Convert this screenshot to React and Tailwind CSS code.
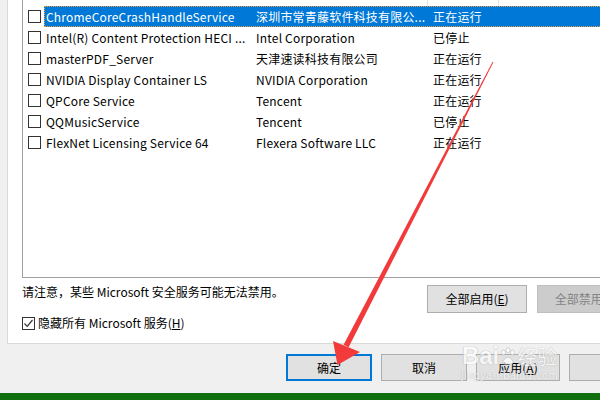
import React from "react";

const rows = [
  { name: "ChromeCoreCrashHandleService", maker: "深圳市常青藤软件科技有限公...", status: "正在运行", sel: true },
  { name: "Intel(R) Content Protection HECI ...", maker: "Intel Corporation", status: "已停止" },
  { name: "masterPDF_Server", maker: "天津速读科技有限公司", status: "正在运行" },
  { name: "NVIDIA Display Container LS", maker: "NVIDIA Corporation", status: "正在运行" },
  { name: "QPCore Service", maker: "Tencent", status: "正在运行" },
  { name: "QQMusicService", maker: "Tencent", status: "已停止" },
  { name: "FlexNet Licensing Service 64", maker: "Flexera Software LLC", status: "正在运行" },
];

const font = "font-['Noto_Sans_CJK_SC','Noto_Sans',sans-serif]";

function Box({ checked }) {
  return (
    <div className="w-[13px] h-[13px] border border-[#333333] bg-white flex items-center justify-center shrink-0">
      {checked && (
        <svg width="11" height="11" viewBox="0 0 11 11">
          <path d="M1.5 5.5 L4.2 8.3 L9.5 2" fill="none" stroke="#333" strokeWidth="1.2" />
        </svg>
      )}
    </div>
  );
}

export default function App() {
  return (
    <div className={`relative w-[600px] h-[400px] overflow-hidden bg-[#f0f0f0] flex flex-col text-[12px] text-black ${font}`}>
      {/* main white panel */}
      <div className="ml-[7px] h-[344px] bg-white border-l border-b border-[#d9d9d9] overflow-hidden flex flex-col shrink-0">
        {/* list box */}
        <div className="ml-[14px] w-[700px] h-[278px] border-l border-b border-[#a0a0a0] flex flex-col shrink-0">
          <div className="h-[6px] flex shrink-0">
            <div className="w-[405px] border-r border-[#e5e5e5]" />
            <div className="w-[71px] border-r border-[#e5e5e5]" />
          </div>
          {rows.map((r, i) => (
            <div key={i} className="h-[21px] flex items-center shrink-0">
              <div className="w-[21px] pl-[5px] flex items-center">
                <Box />
              </div>
              <div
                className={`flex-1 h-[21px] flex items-center leading-[19px] whitespace-nowrap tracking-[0.2px] ${
                  r.sel ? "bg-[#0078d7] text-white border border-dotted border-[#f5a040]" : "border border-transparent"
                }`}
              >
                <div className="w-[210px] pl-[1px]">{r.name}</div>
                <div className="w-[177px] pl-[1px]">{r.maker}</div>
                <div className="pl-[1px]">{r.status}</div>
              </div>
            </div>
          ))}
        </div>
        {/* lower area */}
        <div className="flex pl-[14px] pt-[7px]">
          <div className="flex-1 flex flex-col">
            <div className="h-[14px] leading-[14px] whitespace-nowrap">请注意，某些 Microsoft 安全服务可能无法禁用。</div>
            <div className="mt-[17px] flex items-center gap-[3px] h-[14px] whitespace-nowrap">
              <Box checked />
              <span className="leading-[14px]">
                隐藏所有 Microsoft 服务(<span className="underline">H</span>)
              </span>
            </div>
          </div>
          <div className="flex gap-[10px] shrink-0 mr-[-37px]">
            <div className="w-[100px] h-[28px] bg-[#e1e1e1] border border-[#adadad] flex items-center justify-center">
              全部启用(<span className="underline">E</span>)
            </div>
            <div className="w-[100px] h-[28px] bg-[#cccccc] border border-[#bfbfbf] text-[#838383] flex items-center justify-center">
              全部禁用(<span className="underline">D</span>)
            </div>
          </div>
        </div>
      </div>
      {/* bottom buttons */}
      <div className="flex gap-[9px] pl-[286px] mt-[10px] shrink-0">
        <div className="w-[86px] h-[27px] bg-[#e1e1e1] border-2 border-[#0078d7] flex items-center justify-center shrink-0">确定</div>
        <div className="w-[86px] h-[27px] bg-[#e1e1e1] border border-[#adadad] flex items-center justify-center shrink-0">取消</div>
        <div className="w-[84px] h-[27px] bg-[#e1e1e1] border border-[#adadad] flex items-center justify-center shrink-0">
          应用(<span className="underline">A</span>)
        </div>
        <div className="w-[86px] h-[27px] bg-[#e1e1e1] border border-[#adadad] shrink-0" />
      </div>
      <div className="flex-1" />
      <div className="h-[7px] bg-[#10700f] shrink-0" />

      {/* watermark */}
      <div className="absolute left-[461px] top-[343px] flex flex-col items-center pointer-events-none select-none opacity-70">
        <div className="flex items-end gap-[1px] text-white font-['Liberation_Sans',sans-serif] [text-shadow:0_0_1px_#aaaaaa,0_0_1px_#aaaaaa]">
          <span className="text-[24px] font-bold leading-[26px]">Bai</span>
          <svg width="16" height="20" viewBox="0 0 18 22" className="mb-[2px]">
            <g fill="#ffffff" stroke="#b0b0b0" strokeWidth="0.8">
              <ellipse cx="4" cy="6" rx="2.2" ry="3" />
              <ellipse cx="9" cy="3.5" rx="2.2" ry="3" />
              <ellipse cx="14" cy="6" rx="2.2" ry="3" />
              <path d="M3 16 Q9 6 15 16 Q15 20 9 19 Q3 20 3 16 Z" />
            </g>
          </svg>
          <span className={`text-[20px] leading-[24px] ${font}`}>经验</span>
        </div>
        <div className="text-[11px] leading-[12px] text-white font-['Liberation_Sans',sans-serif] [text-shadow:0_0_1px_#aaaaaa,0_0_1px_#aaaaaa] tracking-[0.5px]">
          jingyan.baidu.com
        </div>
      </div>

      {/* red arrow annotation */}
      <svg className="absolute left-0 top-0 pointer-events-none" width="600" height="400" viewBox="0 0 600 400">
        <polygon points="492.6,61.7 493.4,62.3 348.6,347.3 343.6,344.7" fill="#f23a3a" />
        <polygon points="333,341 360,352 337.5,365" fill="#f23a3a" />
      </svg>
    </div>
  );
}
